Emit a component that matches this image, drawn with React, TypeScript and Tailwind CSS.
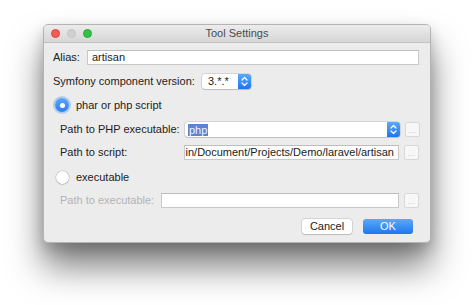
import React from "react";

const font = { fontFamily: '"Liberation Sans", Arial, sans-serif' };

function Stepper() {
  return (
    <div className="w-[13px] h-full rounded-r-[3px] bg-gradient-to-b from-[#5aa9fb] to-[#1a77ee] flex items-center justify-center">
      <svg width="7" height="11" viewBox="0 0 7 11" fill="none">
        <path d="M1 4 L3.5 1.5 L6 4" stroke="white" strokeWidth="1.2" strokeLinecap="round" strokeLinejoin="round" />
        <path d="M1 7 L3.5 9.5 L6 7" stroke="white" strokeWidth="1.2" strokeLinecap="round" strokeLinejoin="round" />
      </svg>
    </div>
  );
}

function Dots() {
  return (
    <div className="w-[15px] h-[15px] bg-[#f7f7f7] border border-[#d8d8d8] rounded-[2px] flex items-end justify-center pb-[2px] shrink-0">
      <span className="text-[7px] leading-[7px] text-[#b5b5b5] tracking-[0.5px]">...</span>
    </div>
  );
}

function Field({ w, children, className = "" }: { w: number; children?: React.ReactNode; className?: string }) {
  return (
    <div
      className={"h-[15px] bg-white border border-[#c9c9c9] border-t-[#bdbdbd] flex items-center overflow-hidden shrink-0 " + className}
      style={{ width: w }}
    >
      {children}
    </div>
  );
}

export default function App() {
  return (
    <div className="w-[474px] h-[305px] bg-white overflow-hidden text-[11px] text-[#222]" style={font}>
      <div className="ml-[43px] mt-[24px] w-[388px] rounded-[5px] border border-[#b4b4b4] bg-[#ececec] shadow-[0_24px_34px_rgba(0,0,0,0.5),0_6px_14px_rgba(0,0,0,0.18)] overflow-hidden">
        {/* title bar */}
        <div className="h-[18px] bg-gradient-to-b from-[#ececec] to-[#d6d6d6] border-b border-[#c2c2c2] relative flex items-center justify-center">
          <div className="absolute left-[7px] top-[4px] flex gap-[7px]">
            <div className="w-[9px] h-[9px] rounded-full bg-[#f25b50] border border-[#e0443a]" />
            <div className="w-[9px] h-[9px] rounded-full bg-[#d0d0d0] border border-[#c4c4c4]" />
            <div className="w-[9px] h-[9px] rounded-full bg-[#33c248] border border-[#27aa37]" />
          </div>
          <span className="text-[#4b4b4b] text-[11px] leading-none">Tool Settings</span>
        </div>

        <div className="flex flex-col pb-[8px]">
          {/* alias */}
          <div className="mt-[7px] h-[15px] flex items-center">
            <span className="ml-[9px] w-[34px]">Alias:</span>
            <Field w={332}>
              <span className="pl-[4px]">artisan</span>
            </Field>
          </div>

          {/* symfony version */}
          <div className="mt-[9px] h-[15px] flex items-center">
            <span className="ml-[9px] w-[149px]">Symfony component version:</span>
            <div className="h-[15px] w-[49px] flex rounded-[3px] bg-white shadow-[0_0_0_0.5px_rgba(0,0,0,0.2),0_1px_1px_rgba(0,0,0,0.12)]">
              <span className="flex-1 pl-[6px] leading-[15px]">3.*.*</span>
              <Stepper />
            </div>
          </div>

          {/* phar radio */}
          <div className="mt-[9px] h-[14px] flex items-center">
            <div className="ml-[11px] w-[14px] h-[14px] rounded-full bg-gradient-to-b from-[#5aa6fa] to-[#2a7ff0] shadow-[0_0_0_2px_rgba(110,165,240,0.45)] flex items-center justify-center">
              <div className="w-[5px] h-[5px] rounded-full bg-white" />
            </div>
            <span className="ml-[7px]">phar or php script</span>
          </div>

          {/* php executable */}
          <div className="mt-[10px] h-[15px] flex items-center">
            <span className="ml-[16px] w-[125px]">Path to PHP executable:</span>
            <div className="h-[15px] w-[215px] flex rounded-[3px] bg-white shadow-[0_0_0_0.5px_rgba(0,0,0,0.2),0_1px_1px_rgba(0,0,0,0.1)]">
              <div className="flex-1 flex items-center pl-[3px]">
                <span className="bg-[#5b84d2] text-[#eef3fc] leading-[12px] px-[1px]">php</span>
              </div>
              <Stepper />
            </div>
            <div className="ml-[5px]">
              <Dots />
            </div>
          </div>

          {/* script */}
          <div className="mt-[8px] h-[15px] flex items-center">
            <span className="ml-[16px] w-[124px]">Path to script:</span>
            <Field w={215} className="justify-end">
              <span className="pr-[4px] whitespace-nowrap">|in/Document/Projects/Demo/laravel/artisan</span>
            </Field>
            <div className="ml-[5px]">
              <Dots />
            </div>
          </div>

          {/* executable radio */}
          <div className="mt-[10px] h-[14px] flex items-center">
            <div className="ml-[12px] w-[13px] h-[13px] rounded-full bg-white shadow-[0_0_0_0.5px_rgba(0,0,0,0.22),0_1px_1px_rgba(0,0,0,0.1)]" />
            <span className="ml-[7px]">executable</span>
          </div>

          {/* path to executable */}
          <div className="mt-[9px] h-[15px] flex items-center">
            <span className="ml-[16px] w-[101px] text-[#b3b3b3]">Path to executable:</span>
            <Field w={238} />
            <div className="ml-[5px]">
              <Dots />
            </div>
          </div>

          {/* buttons */}
          <div className="mt-[11px] h-[15px] flex items-center justify-end pr-[17px] gap-[11px]">
            <button className="w-[50px] h-[15px] rounded-[3px] bg-white text-[#222] leading-[15px] shadow-[0_0_0_0.5px_rgba(0,0,0,0.2),0_1px_1px_rgba(0,0,0,0.12)]">
              Cancel
            </button>
            <button className="w-[50px] h-[15px] rounded-[3px] bg-gradient-to-b from-[#5aa9fb] to-[#1a77ee] text-white leading-[15px]">
              OK
            </button>
          </div>
        </div>
      </div>
    </div>
  );
}
